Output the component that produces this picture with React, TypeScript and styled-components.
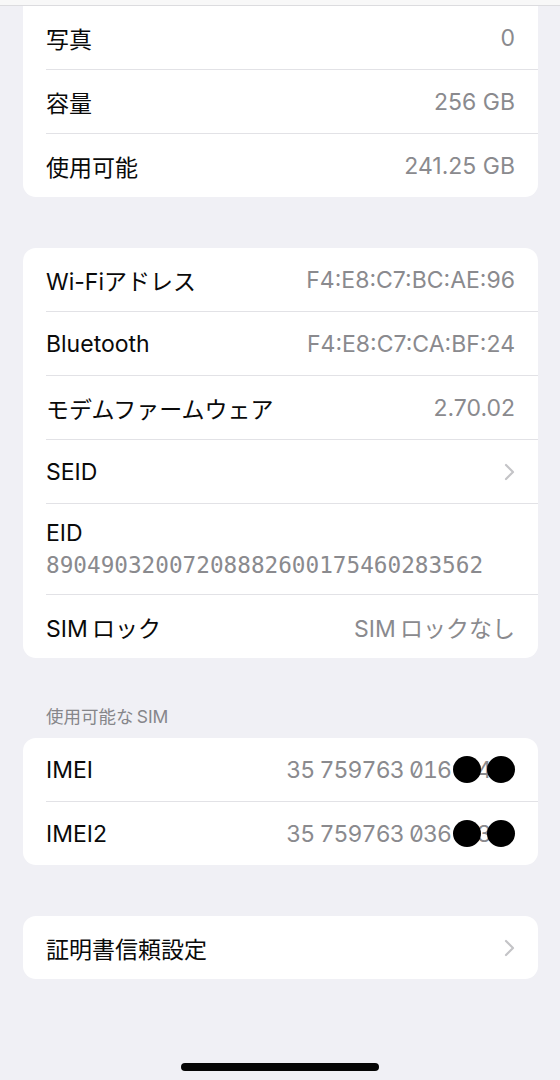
import React from "react";
import styled, { createGlobalStyle } from "styled-components";

const GlobalStyle = createGlobalStyle`
  html, body {
    margin: 0;
    padding: 0;
    background: #f0f0f5;
  }
  body {
    font-family: Inter, "Noto Sans CJK JP", "Noto Sans", sans-serif;
    -webkit-font-smoothing: antialiased;
  }
`;

const Page = styled.div`
  width: 560px;
  min-height: 1080px;
  background: #f0f0f5;
  display: flex;
  flex-direction: column;
`;

const TopBar = styled.div`
  height: 5px;
  background: #f8f8f8;
  border-bottom: 1px solid #dcdcdf;
`;

const Content = styled.div`
  padding: 0 22px 0 23px;
  display: flex;
  flex-direction: column;
`;

const Card = styled.div<{ $top?: number; $flatTop?: boolean }>`
  margin-top: ${(p) => p.$top ?? 0}px;
  background: #ffffff;
  border-radius: ${(p) => (p.$flatTop ? "0 0 13px 13px" : "13px")};
  overflow: hidden;
`;

const Row = styled.div`
  padding-left: 23px;
`;

const RowInner = styled.div<{ $first?: boolean; $height?: number }>`
  height: ${(p) => p.$height ?? 63}px;
  border-top: ${(p) => (p.$first ? "none" : "1px solid #e2e2e6")};
  padding-right: 23px;
  display: flex;
  align-items: center;
  justify-content: space-between;
`;

const Label = styled.span`
  font-size: 23px;
  color: #0a0a0a;
  white-space: nowrap;
`;

const Value = styled.span`
  font-size: 23px;
  color: #8a8a8e;
  white-space: nowrap;
`;

const MonoValue = styled.span`
  font-size: 23px;
  color: #8a8a8e;
  font-feature-settings: "tnum" 1, "zero" 1;
  letter-spacing: -0.9px;
  white-space: nowrap;
  display: inline-flex;
  align-items: center;
`;

const StackInner = styled.div<{ $first?: boolean }>`
  border-top: ${(p) => (p.$first ? "none" : "1px solid #e2e2e6")};
  padding: 15px 23px 14px 0;
  display: flex;
  flex-direction: column;
  gap: 3px;
  line-height: 29px;
`;

const EidNumber = styled.span`
  font-size: 22.7px;
  color: #8a8a8e;
  font-family: "DejaVu Sans Mono", "Liberation Mono", monospace;
  font-weight: 400;
  white-space: nowrap;
`;

const SectionHeader = styled.div`
  margin-top: 48px;
  padding-left: 23px;
  height: 22px;
  line-height: 22px;
  font-size: 17.5px;
  color: #86868a;
  margin-bottom: 10px;
`;

const Mask = styled.span`
  display: inline-flex;
  align-items: center;
  margin-left: 2px;
`;

const Blob = styled.span`
  position: relative;
  z-index: 1;
  width: 28px;
  height: 27px;
  border-radius: 50%;
  background: #000;
`;

const Peek = styled.span`
  margin: 0 -4px;
`;

const HomeIndicator = styled.div`
  margin: 84px auto 0;
  width: 198px;
  height: 8px;
  border-radius: 4px;
  background: #050505;
`;

const Chevron = () => (
  <svg width="11" height="18" viewBox="0 0 11 18">
    <polyline
      points="2,2 9,9 2,16"
      fill="none"
      stroke="#c4c4c7"
      strokeWidth="2.2"
      strokeLinecap="round"
      strokeLinejoin="round"
    />
  </svg>
);

interface IRowProps {
  label: string;
  value?: React.ReactNode;
  chevron?: boolean;
  first?: boolean;
  height?: number;
}

const InfoRow = ({ label, value, chevron, first, height }: IRowProps) => (
  <Row>
    <RowInner $first={first} $height={height}>
      <Label>{label}</Label>
      {chevron ? <Chevron /> : <Value>{value}</Value>}
    </RowInner>
  </Row>
);

const Redacted = ({ prefix, peek }: { prefix: string; peek: string }) => (
  <MonoValue>
    {prefix}
    <Mask>
      <Blob />
      <Peek>{peek}</Peek>
      <Blob />
    </Mask>
  </MonoValue>
);

export default function App() {
  return (
    <Page>
      <GlobalStyle />
      <TopBar />
      <Content>
        <Card $flatTop>
          <InfoRow first label="写真" value="0" height={63} />
          <InfoRow label="容量" value="256 GB" />
          <InfoRow label="使用可能" value="241.25 GB" />
        </Card>

        <Card $top={51}>
          <InfoRow first label="Wi-Fiアドレス" value="F4:E8:C7:BC:AE:96" />
          <InfoRow label="Bluetooth" value="F4:E8:C7:CA:BF:24" />
          <InfoRow label="モデムファームウェア" value="2.70.02" />
          <InfoRow label="SEID" chevron />
          <Row>
            <StackInner>
              <Label>EID</Label>
              <EidNumber>89049032007208882600175460283562</EidNumber>
            </StackInner>
          </Row>
          <InfoRow label={"SIM\u2009ロック"} value={"SIM\u2009ロックなし"} />
        </Card>

        <SectionHeader>{"使用可能な\u2009SIM"}</SectionHeader>
        <Card>
          <Row>
            <RowInner $first>
              <Label>IMEI</Label>
              <Redacted prefix="35 759763 016" peek="4" />
            </RowInner>
          </Row>
          <Row>
            <RowInner>
              <Label>IMEI2</Label>
              <Redacted prefix="35 759763 036" peek="3" />
            </RowInner>
          </Row>
        </Card>

        <Card $top={51}>
          <InfoRow first label="証明書信頼設定" chevron />
        </Card>
      </Content>
      <HomeIndicator />
    </Page>
  );
}
